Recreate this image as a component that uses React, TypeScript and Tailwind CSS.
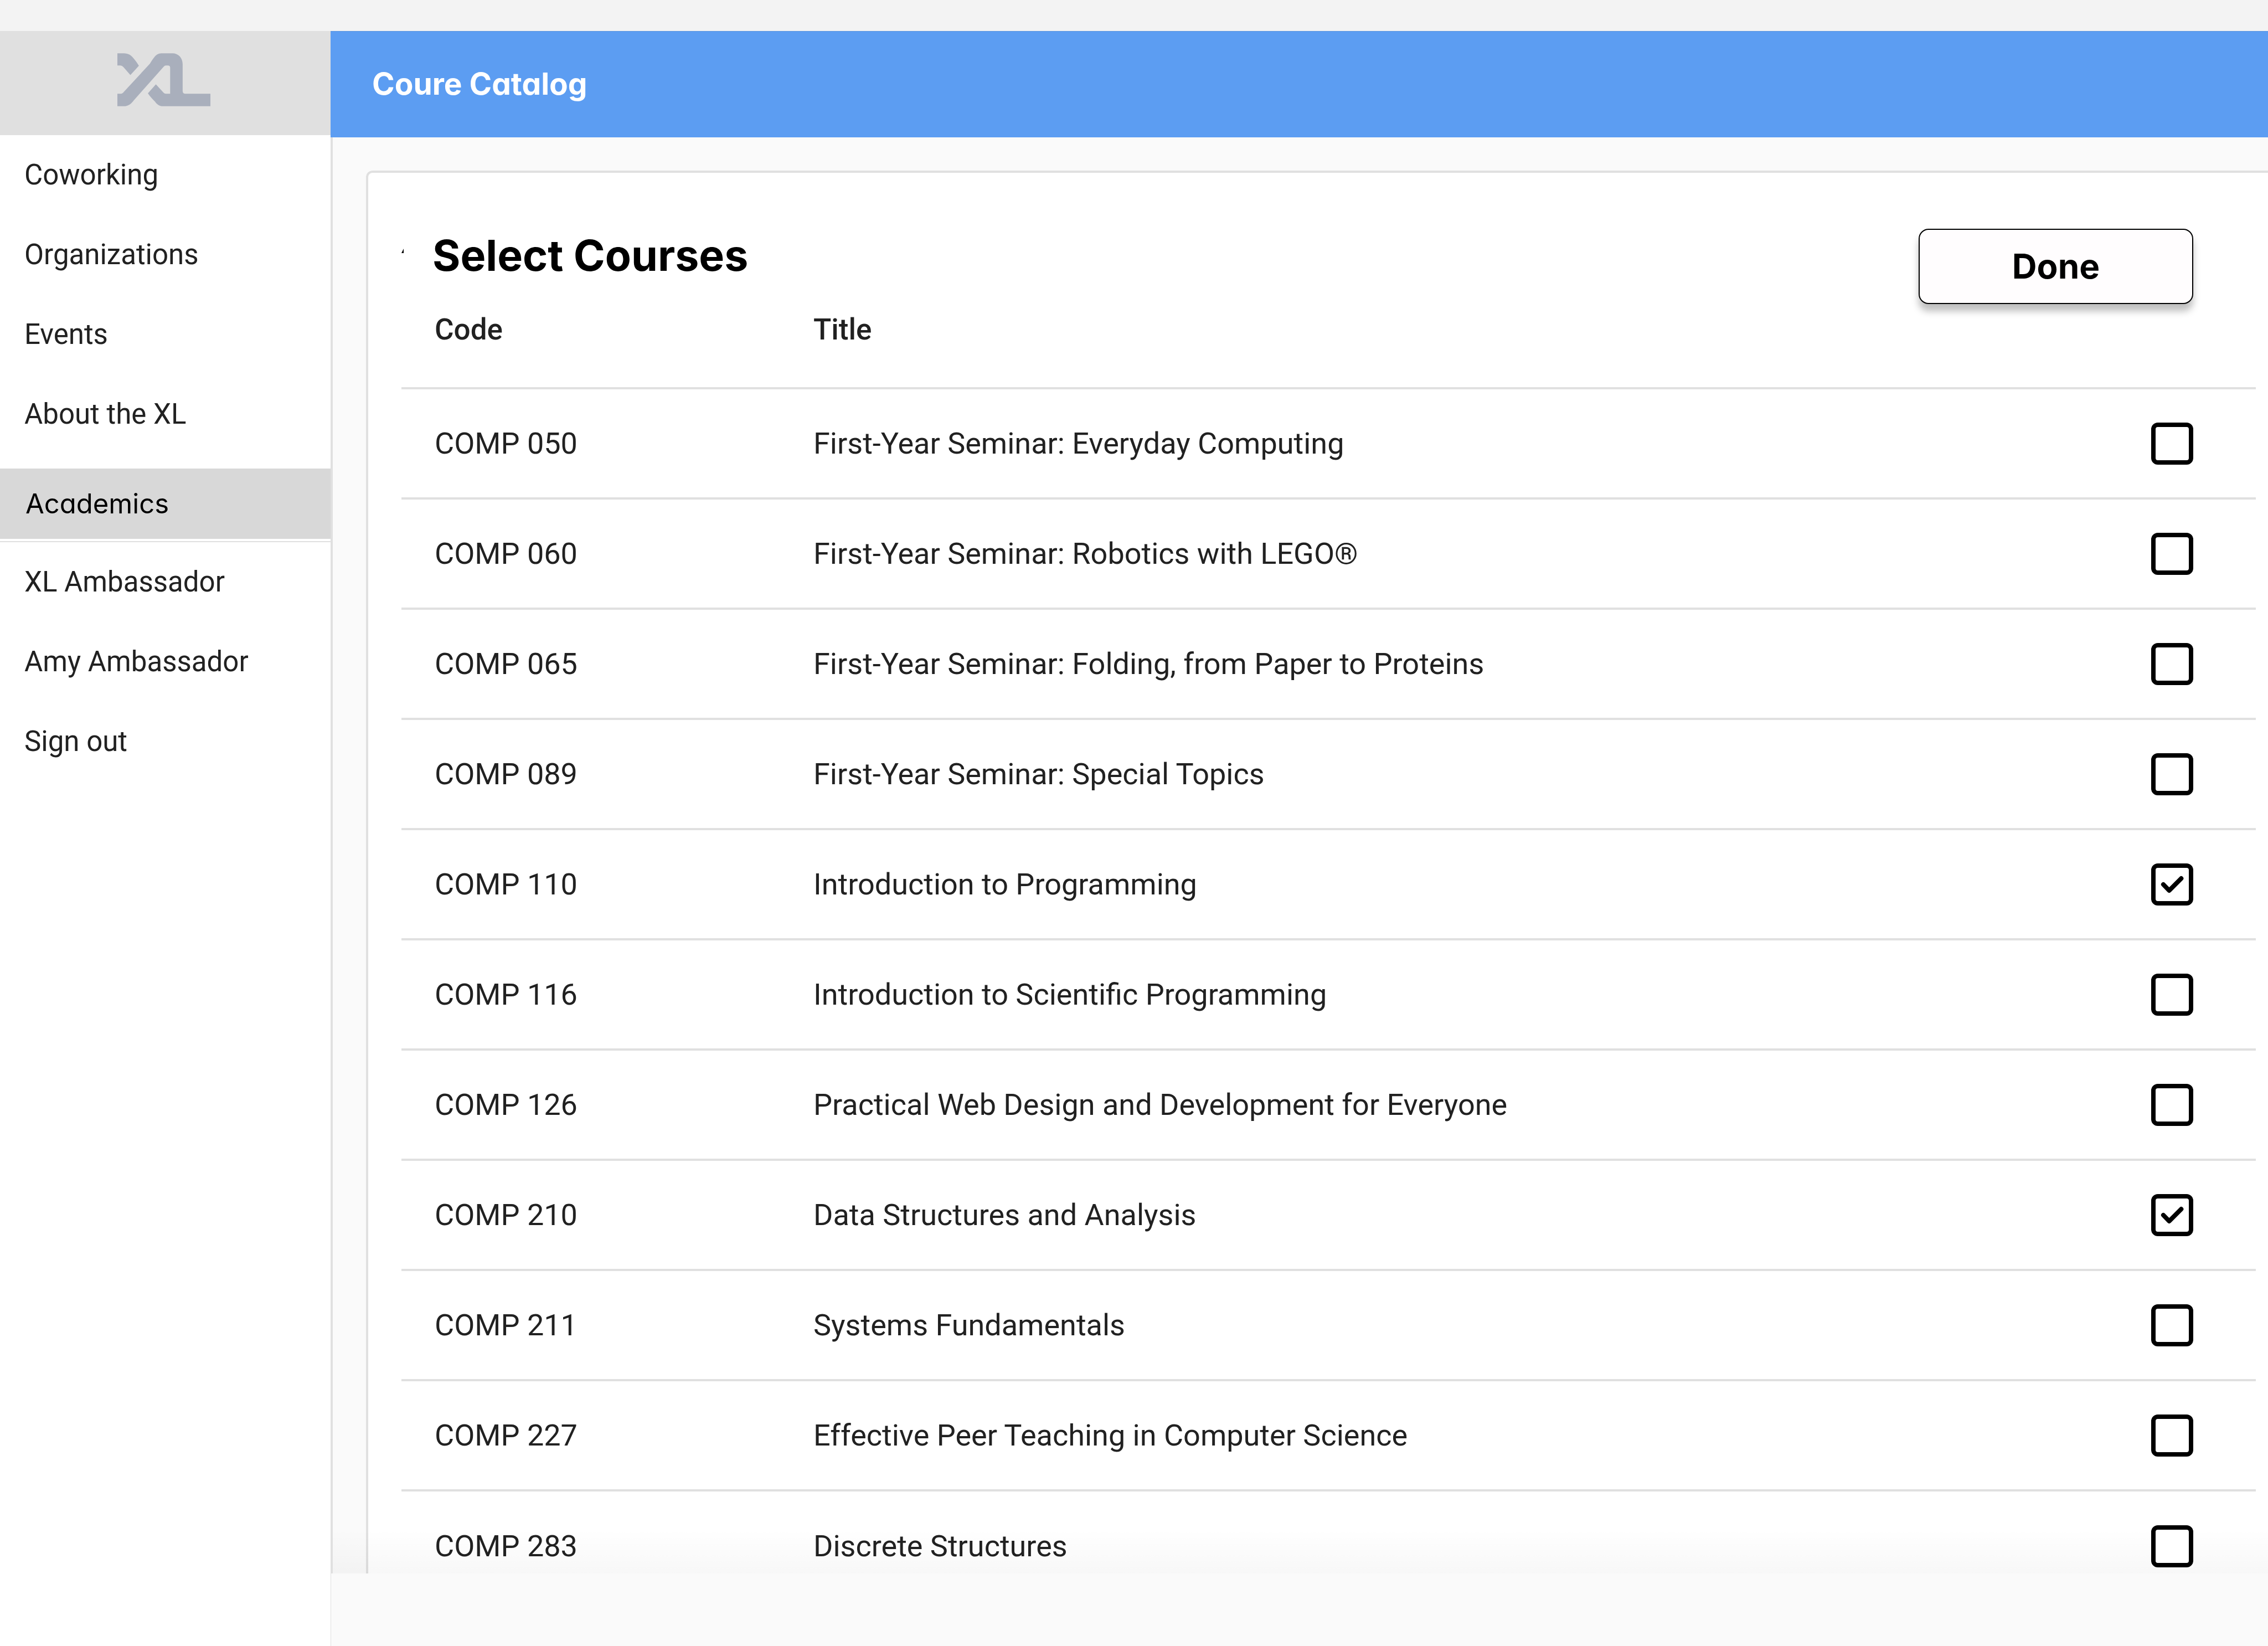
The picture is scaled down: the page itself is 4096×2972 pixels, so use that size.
import { useState } from "react";

const primaryLinks = ["Coworking", "Organizations", "Events", "About the XL"];
const accountLinks = ["XL Ambassador", "Amy Ambassador", "Sign out"];

const courses = [
  { code: "COMP 050", title: "First-Year Seminar: Everyday Computing" },
  { code: "COMP 060", title: "First-Year Seminar: Robotics with LEGO®" },
  { code: "COMP 065", title: "First-Year Seminar: Folding, from Paper to Proteins" },
  { code: "COMP 089", title: "First-Year Seminar: Special Topics" },
  { code: "COMP 110", title: "Introduction to Programming" },
  { code: "COMP 116", title: "Introduction to Scientific Programming" },
  { code: "COMP 126", title: "Practical Web Design and Development for Everyone" },
  { code: "COMP 210", title: "Data Structures and Analysis" },
  { code: "COMP 211", title: "Systems Fundamentals" },
  { code: "COMP 227", title: "Effective Peer Teaching in Computer Science" },
  { code: "COMP 283", title: "Discrete Structures" },
];

function Logo() {
  return (
    <svg viewBox="0 0 186 106" className="h-24 w-[168px] fill-[#a9afbc]" role="img" aria-label="XL">
      <path d="M0 0H13C22 0 28 4 33 11C37 16 40 20 43 25L26 43.500L12 27.500Q9.500 24.500 6 24.500H0Z" />
      <path d="M0 81H6Q10 81 12.500 77.500L65 21C68 16 70 13 73 9C77 3 82 0 88 0H110C122 0 130.500 9 130.500 22V76Q131 81 136 81H186V106H91C84 106 79 102 75.500 97C70 91 65 86 61 80L77 62L92.500 79Q94 81 97 81H105.500V29Q105.500 24.500 101 24.500H97Q94.500 24.500 92.500 27L33 94C28 101 22 106 13 106H0Z" />
    </svg>
  );
}

function NavLink({ label }: { label: string }) {
  return (
    <a href="#" className="flex h-[144px] items-center pl-[44px] text-[51px] leading-[60px] text-[#212121]">
      {label}
    </a>
  );
}

function CourseCheckbox({
  label,
  checked,
  onChange,
}: {
  label: string;
  checked: boolean;
  onChange: () => void;
}) {
  return (
    <span className="relative z-10 inline-flex bg-white align-middle">
      <input
        type="checkbox"
        aria-label={label}
        checked={checked}
        onChange={onChange}
        className="peer size-[76px] cursor-pointer appearance-none rounded-xl border-8 border-black bg-white"
      />
      <svg
        viewBox="0 0 28 28"
        className="pointer-events-none absolute inset-0 hidden size-[76px] fill-none stroke-black stroke-3 peer-checked:block"
        strokeLinecap="round"
        strokeLinejoin="round"
        aria-hidden="true"
      >
        <path d="M8.100 14L12 18L20 10" />
      </svg>
    </span>
  );
}

export default function App() {
  const [selected, setSelected] = useState<string[]>(["COMP 110", "COMP 210"]);

  const toggle = (code: string) =>
    setSelected((now) => (now.includes(code) ? now.filter((c) => c !== code) : [...now, code]));

  return (
    <div className="flex h-screen flex-col bg-white font-[Roboto,sans-serif] text-[#212121]">
      <div className="h-14 shrink-0 bg-[#f3f3f3]" />
      <div className="flex min-h-0 flex-1">
        <aside className="w-[597px] shrink-0">
          <div className="h-[188px] bg-[#e0e0e0] pt-10 pl-[212px]">
            <Logo />
          </div>
          <nav>
            {primaryLinks.map((label) => (
              <NavLink key={label} label={label} />
            ))}
            <div className="mt-[26px] border-b-2 border-[#e0e0e0] pb-1">
              <a
                href="#"
                aria-current="page"
                className="flex h-[127px] items-center bg-[#d8d8d8] pl-[46px] font-[Inter,sans-serif] text-[49px] leading-[60px] text-black [font-feature-settings:'cv11']"
              >
                Academics
              </a>
            </div>
            {accountLinks.map((label) => (
              <NavLink key={label} label={label} />
            ))}
          </nav>
        </aside>

        <main className="flex min-w-0 flex-1 flex-col">
          <header className="flex h-[192px] shrink-0 items-center border-t border-[#5a94de] bg-[#5c9df2] pb-1 pl-[75px]">
            <p className="font-[Inter,sans-serif] text-[55px] leading-[72px] font-bold text-white [font-feature-settings:'cv11']">
              Coure Catalog
            </p>
          </header>

          <div className="relative min-h-0 flex-1 overflow-hidden border-l-4 border-[#e0e0e0] bg-[#fafafa] pt-[60px] pl-[60px]">
            <section className="min-h-full rounded-tl-xl border-t-4 border-l-4 border-[#e0e0e0] bg-white pt-[101px] pr-[22px] pl-[60px]">
              <div className="flex items-start pr-[113px]">
                <svg viewBox="0 0 4 8" className="mt-9 h-2 w-1 fill-black" aria-hidden="true">
                  <path d="M4 0V8H0Z" />
                </svg>
                <h1 className="ml-[52px] flex-1 font-[Inter,sans-serif] text-[77px] leading-[96px] font-bold text-black [font-feature-settings:'cv11']">
                  Select Courses
                </h1>
                <button
                  type="button"
                  className="h-[136px] w-[496px] rounded-[18px] border-2 border-black bg-[#fffdfe] font-[Inter,sans-serif] text-[62px] leading-[80px] font-bold text-black shadow-[0_13px_13px_rgba(0,0,0,0.25)]"
                >
                  Done
                </button>
              </div>

              <table className="w-full table-fixed border-collapse text-left">
                <thead>
                  <tr className="h-[152px] align-top text-[53px] leading-[60px]">
                    <th scope="col" className="w-[744px] pt-4 pl-[60px] font-medium">
                      Code
                    </th>
                    <th scope="col" className="pt-4 font-medium">
                      Title
                    </th>
                    <th scope="col" className="w-[300px]" aria-label="Selected" />
                  </tr>
                </thead>
                <tbody>
                  {courses.map(({ code, title }) => (
                    <tr key={code} className="h-[199px] border-t-4 border-[#e0e0e0] text-[54px] leading-[64px]">
                      <td className="pl-[60px]">{code}</td>
                      <td>{title}</td>
                      <td className="pr-[113px] text-right">
                        <CourseCheckbox
                          label={`${code} ${title}`}
                          checked={selected.includes(code)}
                          onChange={() => toggle(code)}
                        />
                      </td>
                    </tr>
                  ))}
                </tbody>
              </table>
            </section>
            <div className="pointer-events-none absolute inset-x-0 bottom-0 h-20 bg-linear-to-b from-transparent to-black/3" />
          </div>

          <footer className="h-[131px] shrink-0 border-l border-[#e0e0e0] bg-[#fafafa]" />
        </main>
      </div>
    </div>
  );
}
